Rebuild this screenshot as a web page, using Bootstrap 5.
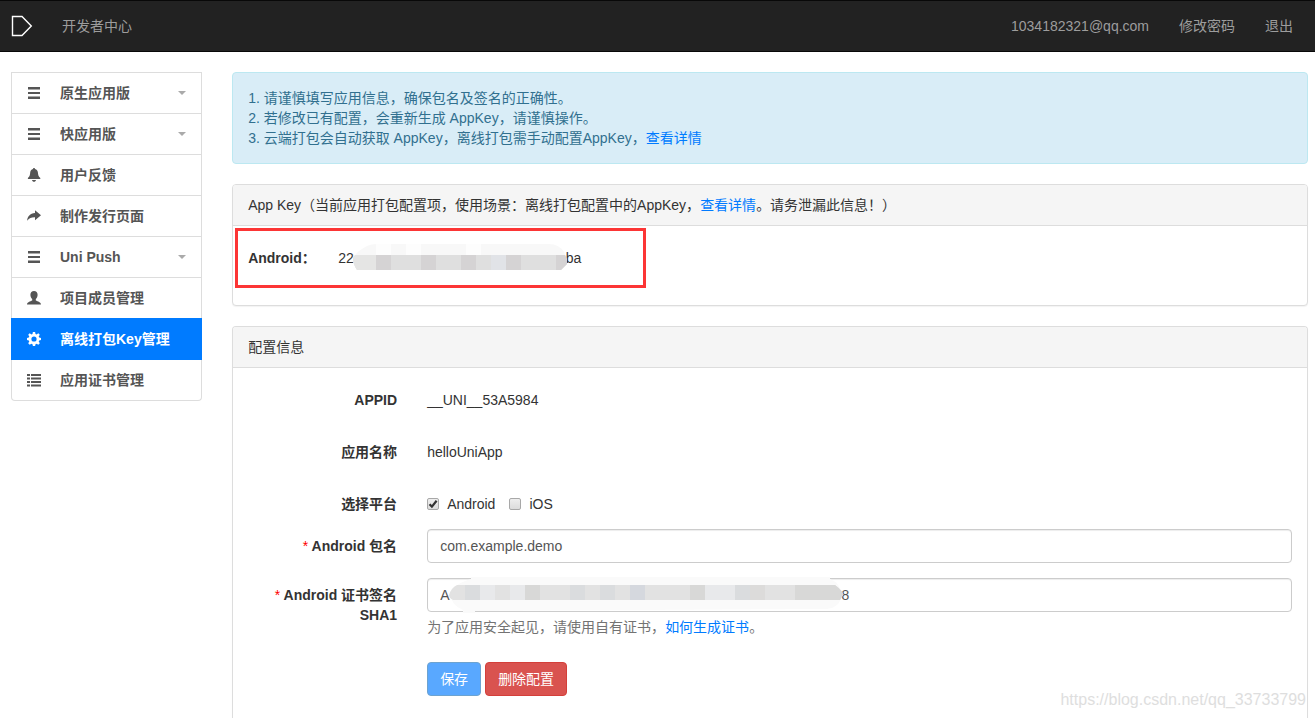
<!DOCTYPE html>
<html lang="zh-CN">
<head>
<meta charset="utf-8">
<meta name="viewport" content="width=device-width, initial-scale=1">
<title>开发者中心</title>
<link href="https://cdn.jsdelivr.net/npm/bootstrap@5.3.0/dist/css/bootstrap.min.css" rel="stylesheet">
<style>
  :root { --line: #ddd; --link: #007bff; }
  body {
    font-family: "Liberation Sans", "Noto Sans CJK SC", sans-serif;
    font-size: 14px; line-height: 20px; color: #333; background: #fff;
  }
  a { color: var(--link); text-decoration: none; }

  .topbar { background: #222; border: solid #080808; border-width: 1px 0; padding: 0 7px 0 11px; min-height: 52px; }
  .topbar .nav-link { color: #9d9d9d; padding: 15px; font-size: 14px; }
  .topbar .nav-link:hover { color: #fff; }
  .topbar .navbar-brand { padding: 0; margin: 0 14px 0 0; line-height: 0; }

  .page-body { padding: 20px 7px 0 11px; }
  .gutter-30 { --bs-gutter-x: 30px; }

  .side-menu { --bs-list-group-border-radius: 4px; --bs-list-group-border-color: #ddd; --bs-list-group-color: #555;
    --bs-list-group-active-bg: #007bff; --bs-list-group-active-border-color: #007bff; --bs-list-group-action-color: #555; font-weight: 700; }
  .side-menu .list-group-item { padding: 10px 15px; }
  .side-menu .list-group-item:first-child { border-top-left-radius: 0; border-top-right-radius: 0; }
  .side-menu svg { width: 14px; height: 14px; margin-right: 19px; fill: currentColor; flex: none; }
  .side-menu .dropdown-toggle::after { margin-left: auto; border-top: 4px solid #aaa; border-right: 4px solid transparent; border-left: 4px solid transparent; }

  .notice { --bs-alert-bg: #d9edf7; --bs-alert-color: #31708f; --bs-alert-border-color: #bce8f1; border-radius: 4px; padding: 15px; margin-bottom: 20px; }

  .panel-card { --bs-card-border-color: #ddd; --bs-card-border-radius: 4px; --bs-card-inner-border-radius: 3px;
    --bs-card-cap-bg: #f5f5f5; --bs-card-cap-padding-x: 15px; --bs-card-cap-padding-y: 10px;
    --bs-card-spacer-x: 15px; --bs-card-spacer-y: 15px; box-shadow: 0 1px 1px rgba(0,0,0,.05); color: #333; }
  .key-card { margin-bottom: 20px; }
  .key-card .card-body { padding-bottom: 37px; }
  .open-end { border-bottom: 0; border-bottom-left-radius: 0; border-bottom-right-radius: 0; }
  .key-name { width: 90px; font-weight: 700; }
  .key-line { padding-top: 7px; }
  .mosaic { display: block; }
  .key-line .mosaic { margin: -4px -1px; position: relative; }
  .highlight-box { position: absolute; left: 2px; top: 43px; width: 411px; height: 60px; border: 3px solid #fc3535; pointer-events: none; }

  .field { margin-bottom: 15px; }
  .field-name { padding-top: 7px; font-weight: 700; text-align: right; display: block; }
  .static-text { padding-top: 7px; margin-bottom: 10px; }
  .star { color: #f00; font-weight: 400; }
  .field .form-control { height: 34px; padding: 6px 12px; font-size: 14px; line-height: 20px; color: #555; border: 1px solid #ccc; border-radius: 4px; box-shadow: inset 0 1px 1px rgba(0,0,0,.075); }
  .masked-input .mosaic { position: absolute; left: 22px; top: -1px; }
  .hint { color: #737373; margin: 5px 0 10px; }
  .tick { padding-top: 7px; display: flex; gap: 14px; }
  .tick label { display: flex; align-items: center; gap: 8px; }
  .tick input { appearance: none; width: 12px; height: 12px; margin: 0; border: 1px solid #a8a8a8; border-radius: 2px; background: linear-gradient(#eee, #dcdcdc); }
  .tick input:checked { background: url("data:image/svg+xml,%3Csvg xmlns='http://www.w3.org/2000/svg' viewBox='0 0 10 10'%3E%3Cpath d='M1.5 5.2 3.9 7.6 8.6 1.8' fill='none' stroke='%23333' stroke-width='2.2'/%3E%3C/svg%3E") center / 10px 10px no-repeat, linear-gradient(#eee, #dcdcdc); }

  .field .btn { font-size: 14px; line-height: 20px; padding: 6px 12px; border-radius: 4px; color: #fff; }
  .btn-save { background: #59a8ff; border-color: #6da3d0; }
  .btn-remove { background: #d9534f; border-color: #d43f3a; }

  .watermark { position: absolute; right: 9px; bottom: 8px; font-size: 16px; line-height: 20px; color: #dedede; }
</style>
</head>
<body class="position-relative min-vh-100 d-flex flex-column">

<nav class="topbar d-flex align-items-center" aria-label="主导航">
  <a class="navbar-brand" href="#" aria-label="首页">
    <svg width="22" height="22" viewBox="0 0 22 22" fill="none" stroke="#fff" stroke-width="1.4"><path d="M1.5 1.5H11L20.300 11 11 20.500H1.500Z"/></svg>
  </a>
  <a class="nav-link" href="#">开发者中心</a>
  <div class="d-flex ms-auto">
    <a class="nav-link" href="#">1034182321@qq.com</a>
    <a class="nav-link" href="#">修改密码</a>
    <a class="nav-link" href="#">退出</a>
  </div>
</nav>

<div class="page-body container-fluid flex-grow-1 d-flex flex-column">
  <div class="row gutter-30 flex-grow-1">
    <aside class="col-2">
      <div class="list-group side-menu">
        <a href="#" class="list-group-item list-group-item-action d-flex align-items-center dropdown-toggle"><svg viewBox="0 0 14 14"><path d="M1 1h12v2.500H1zM1 6h12v2H1zM1 10.500h12V13H1z"/></svg>原生应用版</a>
        <a href="#" class="list-group-item list-group-item-action d-flex align-items-center dropdown-toggle"><svg viewBox="0 0 14 14"><path d="M1 1h12v2.500H1zM1 6h12v2H1zM1 10.500h12V13H1z"/></svg>快应用版</a>
        <a href="#" class="list-group-item list-group-item-action d-flex align-items-center"><svg viewBox="0 0 14 14"><path d="M7 0c.7 0 1 .5 1 1.100 1.800.4 2.700 1.700 2.900 3.500.2 2.300.4 3.900 2.400 5.400v1H.9v-1c2-1.500 2.100-3.100 2.300-5.400C3.400 2.800 4.200 1.500 6 1.100 6 .5 6.300 0 7 0zM5 12h4c-.2 1.200-1 1.800-2 1.800S5.200 13.200 5 12z"/></svg>用户反馈</a>
        <a href="#" class="list-group-item list-group-item-action d-flex align-items-center"><svg viewBox="0 0 14 14"><path d="M8 1.200 14 6.300 8 11.200V8.300C4.500 8.200 2.300 9.200.2 11.700.4 7.600 3 4.500 8 4.100z"/></svg>制作发行页面</a>
        <a href="#" class="list-group-item list-group-item-action d-flex align-items-center dropdown-toggle"><svg viewBox="0 0 14 14"><path d="M1 1h12v2.500H1zM1 6h12v2H1zM1 10.500h12V13H1z"/></svg>Uni Push</a>
        <a href="#" class="list-group-item list-group-item-action d-flex align-items-center"><svg viewBox="0 0 14 14"><path d="M7 0c2.200 0 3.600 1.400 3.600 3.700 0 1.700-.7 3.400-1.800 4.300v1.400c1.900.8 5.200 1.600 5.200 4.200H0c0-2.600 3.300-3.400 5.200-4.200V8C4.100 7.100 3.400 5.400 3.400 3.700 3.400 1.400 4.800 0 7 0z"/></svg>项目成员管理</a>
        <a href="#" class="list-group-item list-group-item-action active d-flex align-items-center" aria-current="page"><svg viewBox="0 0 14 14"><path fill-rule="evenodd" d="M5.900 0h2.200l.4 1.900 1.100.5 1.700-1.100 1.500 1.500-1.100 1.700.5 1.100 1.800.3v2.200l-1.800.4-.5 1.100 1.100 1.700-1.500 1.500-1.700-1.100-1.100.5-.4 1.800H5.900l-.4-1.800-1.100-.5-1.700 1.100-1.500-1.500 1.100-1.700-.5-1.100L0 8.100V5.900l1.800-.3.500-1.100-1.100-1.700 1.500-1.500 1.700 1.100 1.100-.5zM7 4.400A2.600 2.600 0 1 0 7 9.600 2.600 2.600 0 0 0 7 4.400z"/></svg>离线打包Key管理</a>
        <a href="#" class="list-group-item list-group-item-action d-flex align-items-center"><svg viewBox="0 0 14 14"><path d="M0 1h3v2H0zM4 1h10v2H4zM0 4.500h3v2H0zM4 4.500h10v2H4zM0 8h3v2H0zM4 8h10v2H4zM0 11.500h3v2H0zM4 11.500h10v2H4z"/></svg>应用证书管理</a>
      </div>
    </aside>

    <main class="col-10 d-flex flex-column">
      <div class="alert notice">
        1. 请谨慎填写应用信息，确保包名及签名的正确性。<br>
        2. 若修改已有配置，会重新生成 AppKey，请谨慎操作。<br>
        3. 云端打包会自动获取 AppKey，离线打包需手动配置AppKey，<a href="#">查看详情</a>
      </div>

      <section class="card panel-card key-card">
        <div class="card-header">App Key（当前应用打包配置项，使用场景：离线打包配置中的AppKey，<a href="#">查看详情</a>。请务泄漏此信息！）</div>
        <div class="card-body">
          <div class="key-line d-flex">
            <div class="key-name">Android：</div>
            <div class="d-flex">22
              <svg class="mosaic" width="214" height="28" viewBox="0 0 214 28" aria-hidden="true">
                <defs><clipPath id="keyShape"><path d="M14 2Q18 0 24 0H196Q206 0 211 8L214 16V20L208 26H4Q0 20 0 14 4 7 14 2Z"/></clipPath></defs>
                <g clip-path="url(#keyShape)">
                  <path fill="#f8f8f8" d="M0 0h214v11H0z"/>
                  <path fill="#fdfdfd" d="M23 0h15v11H23zM53 0h15v11H53zM113 0h15v11h-15z"/>
                  <path fill="#dfdfdf" d="M0 11h214v15H0z"/>
                  <path fill="#d5d3d4" d="M23 11h15v15H23zM68 11h15v15H68zM108 11h15v15h-15zM153 11h15v15h-15zM203 11h11v15h-11z"/>
                  <path fill="#e1e3e7" d="M138 11h15v15h-15z"/>
                  <path fill="#e5e5e4" d="M0 11h23v15H0z"/>
                </g>
              </svg>
              ba</div>
          </div>
        </div>
        <div class="highlight-box"></div>
      </section>

      <section class="card panel-card open-end flex-grow-1">
        <div class="card-header">配置信息</div>
        <form class="card-body pb-0">
          <div class="row gutter-30 field">
            <div class="col-2 field-name">APPID</div>
            <div class="col-10"><p class="static-text">__UNI__53A5984</p></div>
          </div>
          <div class="row gutter-30 field">
            <div class="col-2 field-name">应用名称</div>
            <div class="col-10"><p class="static-text">helloUniApp</p></div>
          </div>
          <div class="row gutter-30 field">
            <div class="col-2 field-name">选择平台</div>
            <div class="col-10 tick">
              <label><input type="checkbox" checked>Android</label>
              <label><input type="checkbox">iOS</label>
            </div>
          </div>
          <div class="row gutter-30 field">
            <label class="col-2 field-name" for="pkg"><span class="star">*</span> Android 包名</label>
            <div class="col-10"><input class="form-control" id="pkg" type="text" value="com.example.demo"></div>
          </div>
          <div class="row gutter-30 field">
            <label class="col-2 field-name" for="sha"><span class="star">*</span> Android 证书签名SHA1</label>
            <div class="col-10">
              <div class="masked-input position-relative">
                <input class="form-control" id="sha" type="text" value="A&emsp;&emsp;&emsp;&emsp;&emsp;&emsp;&emsp;&emsp;&emsp;&emsp;&emsp;&emsp;&emsp;&emsp;&emsp;&emsp;&emsp;&emsp;&emsp;&emsp;&emsp;&emsp;&emsp;&emsp;&emsp;&emsp;&emsp;&emsp;8">
                <svg class="mosaic" width="394" height="36" viewBox="0 0 394 36" aria-hidden="true">
                  <defs><clipPath id="shaShape"><path d="M8 8H386Q394 14 394 18L391 23H4Q0 21 0 18 2 11 8 8Z"/></clipPath></defs>
                  <path fill="#fafafa" d="M22 0H381V2Q392 6 392 18T378 32L26 34V36H14V33Q2 28 2 18T22 2Z"/>
                  <g clip-path="url(#shaShape)">
                    <path fill="#e2e2e2" d="M0 8h394v15H0z"/>
                    <path fill="#dadcde" d="M16 8h15v15H16zM121 8h15v15h-15zM151 8h15v15h-15zM286 8h15v15h-15z"/>
                    <path fill="#e8e9eb" d="M31 8h15v15H31zM61 8h15v15H61zM256 8h15v15h-15zM271 8h15v15h-15z"/>
                    <path fill="#d8d8d7" d="M76 8h15v15H76zM241 8h15v15h-15zM346 8h48v15h-48z"/>
                    <path fill="#d5d8de" d="M181 8h15v15h-15z"/>
                    <path fill="#dcdbda" d="M301 8h15v15h-15z"/>
                  </g>
                </svg>
              </div>
              <p class="hint">为了应用安全起见，请使用自有证书，<a href="#">如何生成证书</a>。</p>
            </div>
          </div>
          <div class="row gutter-30 field">
            <div class="col-10 offset-2 d-flex gap-1">
              <button type="button" class="btn btn-save">保存</button>
              <button type="button" class="btn btn-remove">删除配置</button>
            </div>
          </div>
        </form>
      </section>
    </main>
  </div>
</div>

<div class="watermark">https://blog.csdn.net/qq_33733799</div>

<script src="https://cdn.jsdelivr.net/npm/bootstrap@5.3.0/dist/js/bootstrap.bundle.min.js"></script>
</body>
</html>
